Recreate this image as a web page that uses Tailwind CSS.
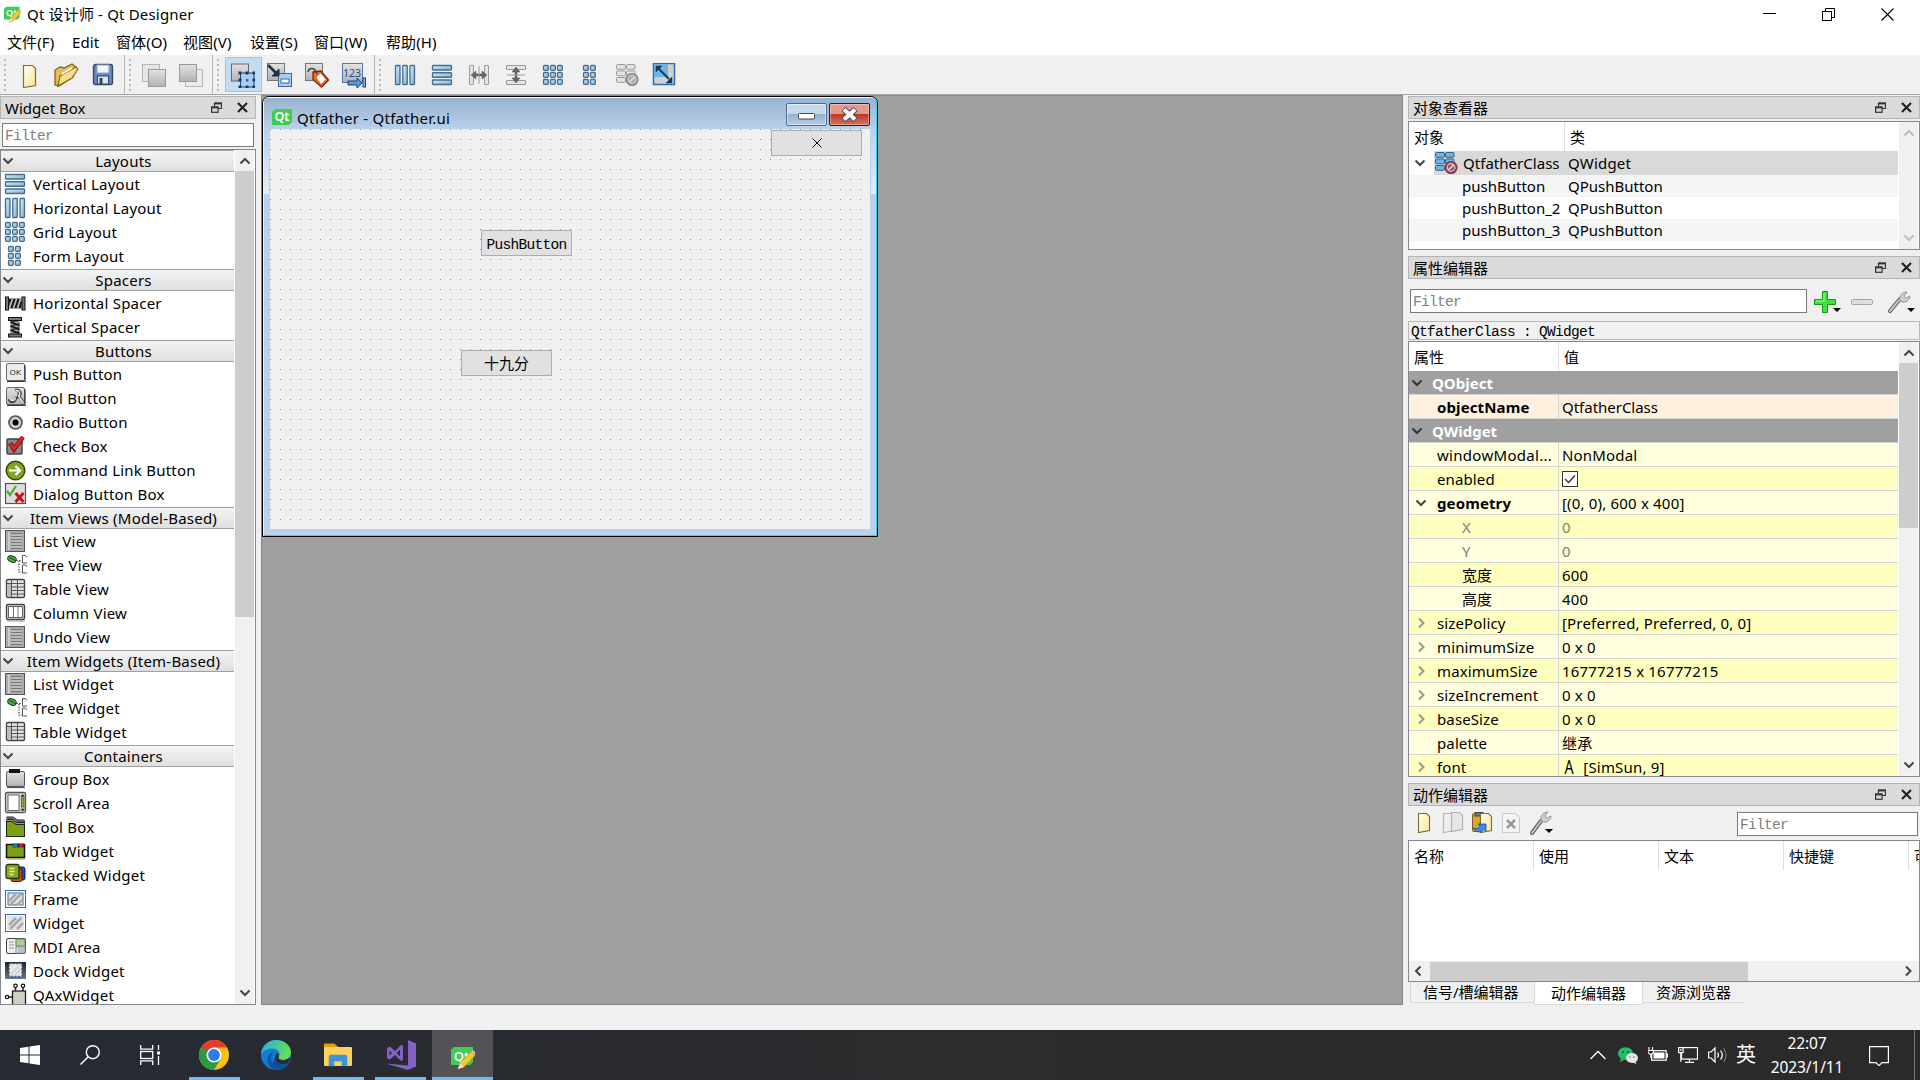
<!DOCTYPE html>
<html lang="zh-CN">
<head>
<meta charset="utf-8">
<title>Qt 设计师 - Qt Designer</title>
<script src="https://cdn.jsdelivr.net/npm/@tailwindcss/browser@4"></script>
</head>
<body class="w-[1920px] h-[1080px] overflow-hidden bg-[#f0f0f0] text-black font-['Noto_Sans','Noto_Sans_CJK_SC',sans-serif] text-[15px] leading-[22px]">
<svg class="absolute w-0 h-0">
  <defs>
    <linearGradient id="blue" x1="0" y1="0" x2="1" y2="1"><stop offset="0" stop-color="#d3f0ff"/><stop offset="1" stop-color="#78b2dc"/></linearGradient>
    <linearGradient id="gray" x1="0" y1="0" x2="0" y2="1"><stop offset="0" stop-color="#e2e2e2"/><stop offset="1" stop-color="#b2b2b2"/></linearGradient>
    <linearGradient id="paper" x1="0" y1="0" x2="1" y2="1"><stop offset="0" stop-color="#fffef0"/><stop offset="1" stop-color="#f7e596"/></linearGradient>
    <linearGradient id="dock" x1="0" y1="0" x2="0" y2="1"><stop offset="0" stop-color="#222"/><stop offset="1" stop-color="#777"/></linearGradient>
    <linearGradient id="edge" x1="0" y1="0" x2="1" y2="0.3"><stop offset="0" stop-color="#2aa9e6"/><stop offset="1" stop-color="#62e05c"/></linearGradient>
    <pattern id="dots" width="10" height="10" patternUnits="userSpaceOnUse"><rect width="1" height="1" fill="#8c8c8c"/></pattern>
  </defs>
</svg>
<div id="app" class="flex flex-col w-[1920px] h-[1080px]"></div>
<script>
const svg = (w, h, body, cls = '') => `<svg class="shrink-0 block ${cls}" width="${w}" height="${h}" viewBox="0 0 ${w} ${h}" fill="none">${body}</svg>`;
const R = (x, y, w, h, fill, stroke, rx = 0, sw = 1) => `<rect x="${x}" y="${y}" width="${w}" height="${h}" rx="${rx}" fill="${fill}"${stroke ? ` stroke="${stroke}" stroke-width="${sw}"` : ''}/>`;
const P = (d, stroke, sw = 1, fill = 'none') => `<path d="${d}" stroke="${stroke}" stroke-width="${sw}" fill="${fill}"/>`;

/* 24x24 toolbar and widget-box artwork */
const bars = (vertical, s = '#4a6c8a', f = 'url(#blue)') => [2.5, 9.75, 17].map(p => vertical ? R(p, 2.5, 4.5, 19, f, s, .7, 1.3) : R(2.5, p, 19, 4.5, f, s, .7, 1.3)).join('');
const cells = (xs, s = '#4a6c8a', f = 'url(#blue)') => xs.map(x => [2.5, 9.5, 16.5].map(y => R(x, y, 4.8, 4.8, f, s, 1, 1.3)).join('')).join('');
const listIc = R(2.5, 1.5, 19, 21, '#aaa', '#555') + R(5, 3, 2, 18, '#ccc') + P('M8 4.5h11M8 7.5h11M8 10.5h11M8 13.5h11M8 16.5h11M8 19.5h11', '#777') + P('M8 6h11M8 9h11M8 12h11M8 15h11M8 18h11', '#ccc');
const treeIc = `<ellipse cx="9" cy="6" rx="4.500" ry="3" transform="rotate(25 9 6)" fill="#4fae4c" stroke="#1c4d20"/>` + P('M6 4l7 4', '#17401a') + P('M13.500 7.500h5M16 8v11h4', '#333', 1.2).replace('fill=', 'stroke-dasharray="1.2 1.5" fill=') + P('M19.500 2.500h3l2 2.500v5h-5z', '#555', 1, '#fff') + P('M19.500 12h3l2 2.500v5.500h-5z', '#555', 1, '#fff');
const tableIc = R(3.5, 2.5, 18, 18, '#e2e2e2', '#444', 1.5, 1.4) + P('M4 6.500h17M8.500 3v17M9 10h12M9 13.500h12M9 17h12M14.500 3v17', '#555') + R(4.5, 7, 3.500, 12.500, '#bbb');
const hatch = inner => R(2.5, 3.5, 20, 17, '#fff', '#2f6fb5') + (inner ? R(5, 6, 15, 12, '#e4e4e4', '#2f6fb5') : R(4, 5, 17, 14, '#e4e4e4')) + P('M6 14l7-7M7 18l11.500-11.500M14 18l6-6', '#aaa', 2.5);
const doc = P('M7.500 3.500h9l3 3v17l-12 2z', '#7a6c3c', 1.2, 'url(#paper)');
const squareG = R(2.5, 1.5, 17, 17, 'url(#gray)', '#777');
const noGo = (c, f) => `<circle cx="17" cy="16.500" r="5.800" fill="${f}" stroke="${c}" stroke-width="1.500"/><path d="M14.200 19.200l5.600-5.600" stroke="#ddd" stroke-width="1.600"/><circle cx="17" cy="16.500" r="3.800" stroke="#ccc" stroke-width="1.200"/>`;
const brokenIc = (s, f, c, cf) => [1.5, 8, 14.5].map(y => R(1.5, y, 9, 4.8, f, s, 1) + R(11.500, y, 8.500, 4.8, f, s, 1)).join('') + noGo(c, cf);
const wrench = `<path d="M3 22L13 10" stroke="#555" stroke-width="4" stroke-linecap="round"/><path d="M3 22L13 10" stroke="#c8c8c8" stroke-width="2" stroke-linecap="round"/><path d="M13 11c-1-4 2-8 7-8l-3 4 2 2 4-2c0 4-4 7-8 6z" fill="#ccc" stroke="#888" stroke-width=".8"/>`;

const IC = {
  vlay: bars(false), hlay: bars(true), grid: cells([2.5, 9.5, 16.5]), form: cells([5.5, 12.5]),
  hsp: R(2.500, 6, 3, 13, '#777', '#111') + R(19, 6, 3, 13, '#777', '#111') + R(6, 7.500, 13, 10, '#555') + P('M6.500 17l3-9M10.500 17l3-9M14.500 17l3-9', '#b9c6cc', 1.3) + P('M8.500 17l3-9M12.500 17l3-9M16.500 17l2-6M6.500 11l1-3', '#151515', 1.5),
  vsp: R(5.5, 2.500, 13, 3, '#777', '#111') + R(5.5, 19, 13, 3, '#777', '#111') + R(7.500, 6, 9, 13, '#555') + P('M7.500 9.500l9-3M7.500 13.500l9-3M7.500 17.500l9-3', '#b9c6cc', 1.3) + P('M7.500 7l9 3.500M7.500 11l9 3.500M7.500 15l9 3.500', '#151515', 1.5),
  push: R(3.5, 1.5, 18, 17, '#ececec', '#666', 1.500) + `<text x="12.500" y="13" font-size="8" font-family="Liberation Sans" fill="#222" text-anchor="middle">OK</text>` + P('M4 19.500h18v-16', '#333', 1.2),
  tool: R(3.5, 1.5, 18, 17, 'url(#gray)', '#666', 1.5) + P('M4 19.500h18v-16', '#333', 1.2) + P('M12 4c5-1 7 4 4 6l5 7M6 13c1 4 6 4 7-1c3 0 4-4 2-6', '#444', 2.6) + P('M12.500 4.500c4-.5 5.500 3.500 3 5.500l5 7M6.500 12.500c1.500 3 5.500 3 6-1', '#eee', 1.3),
  radio: `<circle cx="12.500" cy="12.500" r="6.500" fill="#ccc" stroke="#555" stroke-width="1.700"/><circle cx="12.500" cy="12.500" r="3" fill="#000"/>`,
  check: R(4, 5, 15, 15, '#888', '#444', 1, 1.5) + P('M7 9l4 6l9-12', '#5d0a10', 4.5) + P('M7 9l4 6l9-12', '#dc2632', 3),
  cmd: `<circle cx="12.500" cy="12.500" r="9.300" fill="#84a51e" stroke="#36480a" stroke-width="1.500"/>` + P('M6 12.500h11M12.500 8l4.500 4.500l-4.500 4.500', '#fff', 2.2),
  dlg: R(2.500, 1.500, 20, 20, '#ddd', '#555', 0, 1.2) + P('M4 9l3 4l6-9', '#4caf2a', 2.2) + P('M12.500 11l8 9M20.500 11l-8 9', '#c01818', 3),
  list: listIc, tree: treeIc, table: tableIc,
  col: R(3.5, 3.5, 18, 15, '#ddd', '#444', 1.5, 1.4) + R(5.5, 5.5, 14, 11, '#fff', '#666') + P('M10.500 6v10M15 6v10', '#777') + P('M4 20h18', '#999'),
  group: R(3.5, 4.5, 18, 15, 'url(#gray)', '#555', 1.5) + R(6, 2, 11, 4, '#111') + P('M4 20.500h18', '#555', 1.2),
  scroll: R(2.500, 1.500, 20, 20, '#d4d4d4', '#555', 1.5, 1.3) + R(5, 4, 11, 15.500, '#fff', '#666') + R(18.500, 7, 2.500, 9, '#8eb41e', '#3c500a', 0, .7) + P('M18 5.500l1.700-2l1.700 2zM18 18l1.700 2l1.700-2z', '#222', .5, '#222'),
  toolbox: R(3.5, 6.5, 18, 15, '#7c9f14', '#1e2804') + P('M3.500 3h6l4 3h8M3.500 5.500h6l4 3h8', '#222', 3.2) + P('M3.500 3h6l4 3h8M3.500 5.500h6l4 3h8', '#999', 1.2),
  tab: R(3.5, 5.5, 18, 13, '#7c9f14', '#10150a', 0, 1.500) + R(10, 5, 5, 3, '#1c8ae0', '#111', 0, .6) + R(15.500, 5, 5, 3, '#d22', '#111', 0, .6) + P('M4 20h18', '#888'),
  stack: R(12, 4, 10, 13, '#1e50c0', '#0a2050', 2) + R(8, 5.500, 11, 13, '#c94f10', '#501b00', 2) + R(3, 1.500, 13, 14, '#86aa1a', '#26330a', 2, 1.3) + P('M6.500 5.500h5M6.500 8.500h5M6.500 11.500h4', '#e6f4a0', 1.3),
  frame: hatch(true), widget: hatch(false),
  mdi: R(3.500, 3.500, 19, 15, '#eee', '#444', 1.5) + R(13, 4, 9, 7, '#a9d08a', '#777') + R(13, 12, 9, 6, '#dce8f5', '#889') + P('M6 7h5M6 10h5M6 13h5M15 14h6M15 16h6', '#999'),
  dock: R(2, 3, 21, 17, 'url(#dock)') + R(6, 4.500, 13, 13, '#e8e8e8') + P('M8 15l8-8M12 16l6-6', '#ccc', 1.5) + `<rect x="6" y="4.500" width="13" height="13" stroke="#2a64b8" stroke-width="1.500" stroke-dasharray="2 1.500"/>`,
  qax: R(9.500, 8, 13, 16, '#d2cec6', '#222', 0, 1.300) + P('M12.500 8v-4M20 8v-4M9 14h-4', '#222', 1.500) + `<g fill="#fff" stroke="#111" stroke-width="1.200"><circle cx="12.500" cy="2.800" r="1.700"/><circle cx="20" cy="2.800" r="1.700"/><circle cx="4" cy="14" r="1.700"/></g>`,
  broken: brokenIc('#2f618a', '#6fb4e4', '#7d3a4a', '#a14c5c'),
};

const W = { close: svg(11, 11, P('M1 1l9 9M10 1l-9 9', '#222', 2.2)), float: svg(11, 11, P('M3.500 4v-3h7v5.500h-3', '#333', 1.2) + P('M3 1.500h8', '#333', 1.800) + R(.6, 5, 6.500, 5.300, 'none', '#333', 0, 1.2) + P('M0 5.500h7.500', '#333', 1.800)) };
const chev = (dir, c = '#444', cls = '') => svg(12, 12, P({ d: 'M1.500 3.500l4.500 4.500l4.500-4.500', u: 'M1.500 8.500l4.500-4.500l4.500 4.500', r: 'M4 1.500l4.500 4.500l-4.500 4.500', l: 'M8.500 1.500l-4.500 4.500l4.500 4.500' }[dir], c, 2), cls);
const dockHead = t => `<div class="h-[23px] shrink-0 flex items-center bg-[#dadada] border border-[#b4b4b4] pl-1 pr-[7px]"><span class="flex-1">${t}</span>${W.float}<span class="w-[15px]"></span>${W.close}</div>`;
const filter = cls => `<div class="h-[24px] shrink-0 flex items-center bg-white border border-[#7a7a7a] pl-[2px] pt-[2px] text-[#808080] font-['Liberation_Mono',monospace] text-[14.5px] tracking-[-0.7px] ${cls}">Filter</div>`;
const qtLogo = (w, h) => `<svg class="shrink-0 block" width="${w}" height="${h}" viewBox="0 0 20 16"><path d="M3 0H20V13L17 16H0V3z" fill="#41cd52"/><text x="10" y="12" font-size="12.500" font-weight="600" font-family="Noto Sans" fill="#fff" text-anchor="middle">Qt</text></svg>`;
const qtPen = (s) => `<svg class="shrink-0 block" width="${s}" height="${s}" viewBox="0 0 24 24"><path d="M3 1H22V16L19 19H0V4z" fill="#41cd52"/><text x="10.500" y="14.500" font-size="13" font-weight="600" font-family="Noto Sans" fill="#fff" text-anchor="middle">Qt</text><path d="M7 23l2-6L20 6l4 3.500L13 21z" fill="#f6c927" stroke="#b98a10" stroke-width=".6"/><path d="M20 6l2-2 3 3-1.500 2.500z" fill="#e9b0b0"/><path d="M7 23l2-6 4 4z" fill="#e8dcc8"/></svg>`;

/* title + menu */
const title = `<div class="h-[28px] shrink-0 bg-white flex items-center pl-1">${qtPen(17)}<span class="ml-[6px] flex-1 tracking-[0.17px]">Qt 设计师 - Qt Designer</span>
<div class="flex items-center gap-[46px] pr-[26px]">${svg(13, 13, P('M0 5.500h13', '#000'))}${svg(13, 13, R(.5, 3.500, 9, 9, 'none', '#000') + P('M3.500 3v-2.500h9v9h-2.500', '#000'))}${svg(13, 13, P('M.5.500l12 12M12.500.500l-12 12', '#000', 1.1))}</div></div>`;
const menu = `<div class="h-[27px] shrink-0 bg-white flex items-center pl-[7px] gap-[17px] tracking-[0.1px]">${[['文件(F)', 'w-[48px]'], ['Edit', 'w-[27px]'], ['窗体(O)', 'w-[50px]'], ['视图(V)', 'w-[50px]'], ['设置(S)', 'w-[47px]'], ['窗口(W)', 'w-[55px]'], ['帮助(H)', 'w-[52px]']].map(([m, w]) => `<span class="${w} whitespace-nowrap">${m}</span>`).join('')}</div>`;

/* toolbar */
const grip = svg(4, 32, [0, 5, 10, 15, 20, 25, 30].map(y => R(1, y, 2, 2, '#b9b9b9')).join(''));
const tb = (body, on) => `<span class="w-[37px] h-[35px] flex items-center justify-center pr-[3px] ${on ? 'bg-[#c2dcf2] border border-[#90c8f6]' : ''}">${svg(26, 26, body)}</span>`;
const gs = '#9a9a9a', gf = '#e4e4e4';
const groups = [
  ['w-[125px] pl-[3px]', 'ml-[5px]', [
    doc,
    P('M2 23V8l5-3l4 1l8-4l4 3l-3 10l-14 9z', '#8a6914', 1.3, '#e3bd58') + P('M7 14L23 5l2 2l-6 9L5 24z', '#8a6914', 1.2, '#f6dd92') + P('M9 12l10-6', '#fff', 2),
    R(3.500, 2.500, 19, 20, '#6688bd', '#2f4668', 2, 1.3) + R(7, 3, 12, 8, '#f2f6fa', '#93a5bd') + R(7.500, 14, 11, 8, '#dde4ec', '#2f4668') + R(9.500, 16, 3, 6, '#2f4668')]],
  ['w-[88px] pl-[3px]', 'ml-[4px]', [
    R(2.500, 2.500, 17, 17, '#e6e6e6', '#b5b5b5') + R(8.500, 7.500, 17, 17, 'url(#gray)', '#999'),
    R(8.500, 7.500, 17, 17, '#ececec', '#b5b5b5') + R(2.500, 2.500, 17, 17, 'url(#gray)', '#999')]],
  ['w-[162px] pl-[3px]', 'ml-[5px]', [
    R(2.500, 2, 17, 17, 'url(#gray)', '#666') + R(11.500, 11, 13.500, 14, '#a9cdf6', '#28466e') + [11, 18, 25].map(x => [11, 18, 25].map(y => x === 18 && y === 18 ? '' : R(x - 1.500, y - 1.500, 3, 3, '#1d3860')).join('')).join('') + R(17, 17, 2.500, 2.500, '#2d60b0'),
    R(1.500, 1.500, 17, 17, 'url(#gray)', '#777') + R(12.500, 11.500, 13, 13, '#a9cdf6', '#44658f') + R(15, 17, 8, 4, '#fff', '#44658f') + P('M2 3l9 9', '#234', 2.6) + P('M13 7v7h-7z', '#234', 1, '#234'),
    squareG + P('M10 10l8-1l7.500 9l-7 7l-8.500-7.500z', '#7a2a0a', 1.3, '#ef6c2a') + P('M13 15.500l4.500-4.500l5.500 6.500l-5 5z', '#a64a20', .6, '#fff') + P('M5 10c1-5 7-5 9 2', '#444', 1.5),
    R(2.500, 1.500, 20, 19, 'url(#gray)', '#5c76a0') + `<text x="3" y="15" font-size="10.500" font-family="Noto Sans" fill="#1a4f9c">123</text>` + P('M8 19h9v-3l5 5l-5 5v-3h-9z', '#17447c', 1, '#5b96dc') + R(23, 16, 2.500, 9, '#8cb8ee', '#17447c')]],
];
const lay = [
  bars(true), bars(false),
  [2.5, 17.5].map(x => R(x, 2.500, 4, 19, gf, gs, .5)).join('') + P('M4 12l5-4v3h6v-3l5 4l-5 4v-3h-6v3z', '#555', .5, '#666') + P('M12 3v18', '#999'),
  [2.5, 17.500].map(y => R(2.500, y, 19, 4, gf, gs, .5)).join('') + P('M12 4l4 5h-3v6h3l-4 5l-4-5h3v-6h-3z', '#555', .5, '#666') + P('M3 12h18', '#999'),
  cells([2.5, 9.5, 16.5]), cells([5.5, 12.5]),
  brokenIc(gs, gf, '#888', '#aaa'),
  R(1.500, .500, 21, 21, '#d0d0d0', '#2c6db0', 0, 1.5) + R(2, 1, 14, 13, '#6fb6e0') + P('M6 5l11 11', '#12395c', 2) + P('M4 3h6l-6 6zM20 20h-6l6-6z', '#12395c', .5, '#12395c')];
const toolbar = `<div class="h-[40px] shrink-0 flex border-b border-[#a8a8a8] bg-[#f0f0f0]">
${groups.map(([w, ml, ics], gi) => `<div class="${w} flex items-center border-r border-[#b4b4b4]">${grip}<div class="flex ${ml}">${ics.map((b, i) => tb(b, gi === 2 && i === 0)).join('')}</div></div>`).join('')}
<div class="flex items-center pl-[3px]">${grip}<div class="flex ml-[5px]">${lay.map(b => `<span class="w-[37px] h-[35px] flex items-center justify-center pr-[2px]">${svg(24, 24, b)}</span>`).join('')}</div></div></div>`;

/* widget box */
const cats = [
  ['Layouts', [['vlay', 'Vertical Layout'], ['hlay', 'Horizontal Layout'], ['grid', 'Grid Layout'], ['form', 'Form Layout']]],
  ['Spacers', [['hsp', 'Horizontal Spacer'], ['vsp', 'Vertical Spacer']]],
  ['Buttons', [['push', 'Push Button'], ['tool', 'Tool Button'], ['radio', 'Radio Button'], ['check', 'Check Box'], ['cmd', 'Command Link Button'], ['dlg', 'Dialog Button Box']]],
  ['Item Views (Model-Based)', [['list', 'List View'], ['tree', 'Tree View'], ['table', 'Table View'], ['col', 'Column View'], ['list', 'Undo View']]],
  ['Item Widgets (Item-Based)', [['list', 'List Widget'], ['tree', 'Tree Widget'], ['table', 'Table Widget']]],
  ['Containers', [['group', 'Group Box'], ['scroll', 'Scroll Area'], ['toolbox', 'Tool Box'], ['tab', 'Tab Widget'], ['stack', 'Stacked Widget'], ['frame', 'Frame'], ['widget', 'Widget'], ['mdi', 'MDI Area'], ['dock', 'Dock Widget'], ['qax', 'QAxWidget']]],
];
const left = `<aside class="w-[256px] shrink-0 pt-px flex flex-col">${dockHead('Widget Box')}${filter('mt-1 mx-[2px]')}
<div class="mt-[2px] h-[856px] border border-[#828790] bg-white flex overflow-hidden">
<div class="w-[233px] shrink-0 tracking-[0.22px]">${cats.map(([c, items]) => `<div class="h-[22px] flex items-center border-y border-[#a0a0a0] bg-linear-to-b from-[#f4f4f4] to-[#dfdfdf] pl-px pr-px">${chev('d')}<span class="flex-1 text-center whitespace-nowrap">${c}</span></div><div class="mb-px">${items.map(([i, t]) => `<div class="h-[24px] flex items-center pl-[3px]">${svg(24, 24, IC[i], 'ml-[-1px] mr-px')}<span class="ml-[5px]">${t}</span></div>`).join('')}</div>`).join('')}</div>
<div class="w-[19px] ml-px bg-[#f0f0f0] flex flex-col items-center justify-between"><span class="h-[21px] flex items-center">${chev('u')}</span><div class="w-full h-[446px] bg-[#cdcdcd]"></div><span class="flex-1"></span><span class="h-[23px] flex items-center">${chev('d')}</span></div>
</div></aside>`;

/* form window */
const pb = (pos, t, mono) => `<div class="absolute ${pos} w-[91px] h-[26px] bg-[#e1e1e1] border border-[#adadad] flex items-center justify-center ${mono ? "pt-[3px] font-['Liberation_Mono',monospace] text-[14.5px] tracking-[-0.7px]" : ''}">${t}</div>`;
const center = `<div class="w-[1142px] h-[910px] ml-[5px] shrink-0 bg-[#a0a0a0] border border-[#828790] relative">
<div class="absolute left-0 top-0 w-[616px] h-[441px] rounded-t-[7px] border border-black bg-[#b9d1ea] overflow-hidden">
<div class="w-full h-full border border-t-white border-l-[#e4f0fb] border-r-[#35d0f0] border-b-[#35d0f0] rounded-t-[6px] flex flex-col relative">
<div class="h-[31px] shrink-0 bg-linear-to-b from-[#98b2d1] to-[#b9d1ea] flex items-start pl-2"><div class="mt-[11px]">${qtLogo(20, 16)}</div><span class="ml-[5px] mt-[9px] flex-1 tracking-[0.26px]">Qtfather - Qtfather.ui</span>
<div class="flex gap-[2px] mt-[5px] mr-[6px]">
<div class="w-[41px] h-[23px] border border-[#4d6a8f] rounded-[2px] bg-linear-to-b from-[#c5d8ec] from-45% via-[#95b0cf] via-50% to-[#b4cce6] shadow-[inset_0_0_0_1px_rgba(255,255,255,0.5)] flex items-center justify-center pt-1">${svg(17, 7, R(.5, .5, 16, 5.500, '#fff', '#445', 1))}</div>
<div class="w-[41px] h-[23px] border border-[#4a1410] rounded-[2px] bg-linear-to-b from-[#e39a8e] from-45% via-[#bc3c27] via-50% to-[#d4705c] shadow-[inset_0_0_0_1px_rgba(255,255,255,0.35)] flex items-center justify-center">${svg(19, 17, P('M3.500 3l12 11M15.500 3l-12 11', '#4a4a55', 6) + P('M4 3.500l11 10M15 3.500l-11 10', '#fff', 4))}</div></div></div>
<div class="absolute left-0 top-[31px] w-[5px] h-[65px] bg-linear-to-b from-[#b9d1ea] to-[#e3eefa]"></div>
<div class="absolute right-0 top-[31px] w-[5px] h-[65px] bg-linear-to-b from-[#b9d1ea] to-[#e3eefa]"></div>
<div class="ml-[6px] w-[600px] h-[400px] bg-[#f0f0f0] relative">${svg(600, 400, R(0, 0, 600, 400, 'url(#dots)'))}
${pb('left-[501px] top-[1px]', svg(10, 10, P('M.5.500l9 9M9.500.500l-9 9', '#000', 1)))}${pb('left-[211px] top-[101px]', 'PushButton', true)}${pb('left-[191px] top-[221px]', '十九分')}</div>
</div></div></div>`;

/* object inspector */
const kids = [['pushButton', 'bg-[#f5f5f5]'], ['pushButton_2', ''], ['pushButton_3', 'bg-[#f5f5f5]']];
const inspector = `${dockHead('对象查看器')}<div class="mt-[2px] h-[129px] border border-[#828790] bg-white flex"><div class="w-[489px]">
<div class="h-[29px] flex items-center"><span class="w-[156px] h-full flex items-center pl-[5px] pt-px border-r border-[#e0e0e0]">对象</span><span class="pl-[5px] pt-px">类</span></div>
<div class="h-[24px] flex"><span class="w-[25px] flex items-center pl-[5px]">${chev('d')}</span><div class="flex-1 bg-[#d9d9d9] flex items-center">${svg(24, 24, IC.broken)}<span class="w-[110px] shrink-0 pl-[5px] tracking-[0.03px]">QtfatherClass</span><span class="tracking-[0.2px]">QWidget</span></div></div>
${kids.map(([n, bg]) => `<div class="h-[22px] flex items-center ${bg}"><span class="w-[159px] shrink-0 pl-[53px]">${n}</span><span>QPushButton</span></div>`).join('')}</div>
<div class="flex-1 ml-px mr-px bg-[#f0f0f0] flex flex-col items-center justify-between py-[5px]">${chev('u', '#bfbfbf')}${chev('d', '#bfbfbf')}</div></div>`;

/* property editor: [name, value, row colour, indent, arrow, flags] */
const L = 'bg-[#ffffdd]', D = 'bg-[#ffffbf]';
const props = [['QObject'], ['objectName', 'QtfatherClass', 'bg-[#fff0df]', 28, '', 'b'], ['QWidget'], ['windowModal...', 'NonModal', L, 28], ['enabled', null, D, 28], ['geometry', '[(0, 0), 600 x 400]', L, 28, 'd', 'b'], ['X', '0', D, 53, '', 'g'], ['Y', '0', L, 53, '', 'g'], ['宽度', '600', D, 53], ['高度', '400', L, 53], ['sizePolicy', '[Preferred, Preferred, 0, 0]', D, 28, 'r'], ['minimumSize', '0 x 0', L, 28, 'r'], ['maximumSize', '16777215 x 16777215', D, 28, 'r'], ['sizeIncrement', '0 x 0', L, 28, 'r'], ['baseSize', '0 x 0', D, 28, 'r'], ['palette', '继承', L, 28], ['font', '<span class="inline-block font-[\'Liberation_Serif\',serif] text-[19px] scale-x-75 ml-px mr-[8px]">A</span>[SimSun, 9]', D, 28, 'r']];
const prow = ([n, v, bg, ind, ar, fl]) => v === undefined
  ? `<div class="h-[24px] bg-[#a0a0a0] border-b border-[#d4d4d4] flex items-center pl-[2px] text-white font-bold text-[15px]">${chev('d', '#333')}<span class="ml-[9px]">${n}</span></div>`
  : `<div class="h-[24px] ${bg} border-b border-[#d4d4d4] flex items-center ${fl === 'g' ? 'text-[#808080]' : ''}"><span class="w-[150px] h-full shrink-0 border-r border-[#d4d4d4] flex items-center tracking-[0.12px]"><span class="${ind === 53 ? 'w-[53px]' : 'w-[28px]'} shrink-0 pl-[6px]">${ar ? chev(ar, ar === 'r' ? '#9a9a88' : '#444') : ''}</span><span class="${fl === 'b' ? 'font-bold text-[15px]' : n === 'windowModal...' ? 'tracking-[0.3px]' : ''}">${n}</span></span><span class="pl-[3px] flex items-center ${n === 'objectName' ? 'tracking-[-0.02px]' : 'tracking-[0.18px]'}">${v === null ? svg(16, 16, R(.5, .5, 15, 15, '#fff', '#333') + P('M3 8l3.500 3.500l6.500-7', '#333', 1.4)) : v}</span></div>`;
const dropTri = `<path d="M20 20h8l-4 4z" fill="#000"/>`;
const property = `<div class="mt-[6px]">${dockHead('属性编辑器')}</div>
<div class="flex items-center mt-[10px] pl-[2px] h-[24px]">${filter('w-[397px]')}<div class="flex ml-[6px] gap-[9px] pt-px">
${svg(28, 28, P('M9.500 3.500h5v8h8v5h-8v8h-5v-8h-8v-5h8z', '#119c11', 1, '#3ee23e') + P('M11 5v8h-8', '#a4f7a4', 1.2) + dropTri)}
${svg(28, 28, R(1.500, 11.500, 21, 5, '#ddd', '#a5a5a5', 1))}${svg(28, 28, `<g transform="translate(0 1)">${wrench}</g>` + dropTri)}</div></div>
<div class="mt-[8px] h-[19px] border border-[#b9b9b9] flex items-center pl-[2px] pt-[2px] font-['Liberation_Mono',monospace] text-[14.5px] tracking-[-0.7px]">QtfatherClass : QWidget</div>
<div class="mt-px h-[436px] border border-[#828790] bg-white flex overflow-hidden"><div class="w-[489px] shrink-0">
<div class="h-[29px] flex"><span class="w-[150px] flex items-center pl-[5px] pt-px border-r border-[#e0e0e0]">属性</span><span class="pl-[5px] flex items-center pt-px">值</span></div>
${props.map(prow).join('')}</div>
<div class="w-[19px] ml-px bg-[#f0f0f0] flex flex-col items-center"><span class="h-[21px] flex items-center">${chev('u')}</span><div class="w-full h-[165px] bg-[#cdcdcd]"></div><span class="flex-1"></span><span class="h-[23px] flex items-center">${chev('d')}</span></div></div>`;

/* action editor */
const doc24 = (dx, s, f) => `<g transform="translate(${dx} 0)"><path d="M6.500 2.500h8l3 3v14l-11 2z" stroke="${s}" stroke-width="1.100" fill="${f}"/></g>`;
const actIcons = [doc24(0, '#7a6c3c', 'url(#paper)'), doc24(-4, '#b5b5b5', '#eee') + `<g transform="translate(0 -1)">${doc24(4, '#b0b0b0', '#e6e6e6')}</g>`,
  R(2.500, 2.500, 13, 18, '#d6a92c', '#80611a', 1.500) + R(5, 1.500, 8, 3.500, '#777', '#444') + doc24(4, '#8a6d22', 'url(#paper)') + P('M3 17c5 2 7-1 7-3l-2-1h8v7l-2-1.500c-3 4-8 3-11-1.500z', '#1450a0', .8, '#3b8be8'),
  P('M3.500 2.500h13l4 4v15h-17z', '#c9c9c9', 1, '#f4f4f4') + P('M8 9l8 8M16 9l-8 8', '#999', 2.500)];
const action = `<div class="mt-[6px]">${dockHead('动作编辑器')}</div>
<div class="h-[34px] flex items-center pl-1 pr-[2px] pt-[2px]"><div class="flex gap-[5px]">${actIcons.map(b => svg(24, 24, b)).join('')}${svg(28, 28, wrench.replace(/M3 22L13 10/g, 'M4 24L13 12') + `<path d="M17 20h8l-4 4z" fill="#000"/>`, 'mt-[-2px]')}</div><span class="flex-1"></span>${filter('w-[181px]')}</div>
<div class="h-[142px] border border-[#828790] bg-white flex flex-col overflow-hidden"><div class="h-[29px] flex overflow-hidden">${['名称', '使用', '文本', '快捷键'].map(t => `<span class="w-[125px] shrink-0 border-r border-[#e0e0e0] pl-[5px] pt-px flex items-center">${t}</span>`).join('')}<span class="pl-[5px] pt-[4px] whitespace-nowrap">可选的</span></div>
<span class="flex-1"></span><div class="h-[20px] bg-[#f0f0f0] flex items-center"><span class="w-[21px] pl-[3px]">${chev('l')}</span><div class="w-[318px] h-[19px] bg-[#cdcdcd]"></div><span class="flex-1"></span>${chev('r', '#444', 'mr-[5px]')}</div></div>
<div class="flex items-start pl-[2px] leading-[20px]"><span class="w-[124px] h-[21px] border border-t-0 border-r-0 border-[#d9d9d9] pl-[12px]">信号/槽编辑器</span><span class="w-[109px] h-[23px] border border-t-0 border-[#d9d9d9] bg-white pl-[16px] pt-px">动作编辑器</span><span class="w-[101px] h-[21px] border-b border-[#d9d9d9] pl-[13px]">资源浏览器</span></div>`;
const right = `<aside class="w-[512px] ml-[5px] shrink-0 pt-px flex flex-col whitespace-nowrap">${inspector}${property}${action}</aside>`;

/* taskbar */
const task = (w, body, cls = '', line = '') => `<div class="${w} h-[50px] relative flex items-center justify-center ${cls}">${body}${line ? `<span class="absolute bottom-0 ${line} h-[3px] bg-[#76b9ed]"></span>` : ''}</div>`;
const chrome = svg(30, 30, `<circle cx="15" cy="15" r="15" fill="#fbc116"/><path d="M2 7.500A15 15 0 0 0 15 30L21.500 18.700L15 15L8.500 18.700z" fill="#2a9a48"/><path d="M2 7.500A15 15 0 0 1 28 7.500H15L8.500 18.700z" fill="#e33b2e"/><path d="M2 7.500L8.500 18.700L12 12z" fill="#2a9a48"/><circle cx="15" cy="15" r="7.500" fill="#fff"/><circle cx="15" cy="15" r="5.900" fill="#2d7cf0"/>`);
const edge = svg(30, 30, `<circle cx="15" cy="15" r="15" fill="#0f7fd4"/><path d="M0 14C1 5 8 0 15 0c9 0 15 6 15 12.500c0 5-4 7.500-8 7.500c-3 0-5-1-4.500-2.500c3-5-1-9-6-9C6 8.500 2 11 0 14z" fill="url(#edge)"/><path d="M12 12c-4 5-2 13 6 15c4 1 8-1 10-4c-3 6-9 8-15 6.500C5 27 4 15 12 12z" fill="#0b55a5"/><path d="M17.500 17.500c-.5 1.500 1.500 2.500 4.500 2.500c3 0 6-1.500 7-3.500c0 3-.5 5-2 7c-5 2-13 1-13-6c0-2 1-4 2.500-4.500c1.500 1 2 3 1 4.500z" fill="#2b2d33"/><path d="M14 18c1 6 8 8 14 5c-4 7-14 7-17 1z" fill="#0c4f9c"/>`);
const folder = svg(28, 24, P('M.5 1h10l3 3h-13z', '#dd9f10', 1, '#dd9f10') + R(0, 4, 28, 19, '#fcd05c', '', 1) + P('M5 23v-9q0-2 2-2h14q2 0 2 2v9h-5v-5h-8v5z', '#3d95d8', .5, '#3d95d8'));
const vs = svg(30, 30, `<path d="M22 0l8 3.500v23L22 30L0 23.500l22 2z" fill="#8661c5"/><path d="M1 8l3-1.500l5 4.500l6-6l2 1v14l-2 1l-6-6l-5 4.500L1 18z" fill="#8661c5"/><path d="M3.500 10.500v5l2.500-2.500zM14 9.500v7L10.500 13z" fill="#2b2d33"/>`);
const taskbar = `<div class="h-[50px] shrink-0 bg-linear-to-r from-[#252a33] via-[#2c2c2e] to-[#2a2a2b] flex text-white">
${task('w-[60px]', svg(20, 20, `<path d="M0 3l8.500-1.300V9.500H0zM9.500 1.500L20 0v9.500H9.500zM0 10.500h8.500v7.800L0 17zM9.500 10.500H20V20L9.500 18.500z" fill="#fff"/>`))}
${task('w-[60px]', svg(20, 20, `<circle cx="12.800" cy="7.200" r="6.500" stroke="#fff" stroke-width="1.400"/>` + P('M8 12L.5 19.500', '#fff', 1.4)))}
${task('w-[60px]', svg(20, 20, P('M.7 0v4.200h12V0M.7 20v-4.200h12V20M18.500 0v5M18.500 11v9', '#fff', 1.300) + R(.7, 6.500, 12, 7, 'none', '#fff', 0, 1.3) + R(17, 6.500, 3, 3, '#fff')))}
${task('w-[66px] pl-[2px]', chrome, '', 'left-[9px] w-[51px]')}${task('w-[60px]', edge)}${task('w-[62px] pl-[2px]', folder, '', 'left-[7px] w-[51px]')}${task('w-[64px] pl-px', vs, '', 'left-[7px] w-[51px]')}
${task('w-[61px]', `<span class="mt-[5px] ml-[1px]">${qtPen(24)}</span>`, 'bg-[#525357]', 'left-0 w-[61px]')}
<span class="flex-1"></span>
<div class="flex items-center">
<span class="mr-[12px]">${svg(16, 10, P('M.5 9L8 1.500L15.500 9', '#fff', 1.3))}</span>
<span class="mr-[10px]">${svg(20, 17, `<ellipse cx="7.500" cy="6.500" rx="7.500" ry="6.300" fill="#21c064"/><path d="M3 11l-1 4 4-2z" fill="#21c064"/><ellipse cx="14" cy="11" rx="6" ry="5" fill="#e6e6e6"/><path d="M17 14l1.500 3-4-1.500z" fill="#e6e6e6"/><circle cx="5" cy="5" r=".9" fill="#145"/><circle cx="10" cy="5" r=".9" fill="#145"/><circle cx="12" cy="10" r=".8" fill="#777"/><circle cx="16" cy="10" r=".8" fill="#777"/>`)}</span>
<span class="mr-[10px]">${svg(20, 16, R(3.700, 3.700, 14.500, 9.500, 'none', '#fff', 0, 1.200) + R(5.500, 5.500, 11, 6, '#fff') + R(18.500, 6.500, 1.500, 4, '#fff') + P('M1 0v3M4.500 0v3M0 3.500h5.500v2l-1.500 1.500h-2.500l-1.500-1.500zM2.800 7v4', '#fff', 1.1, '#2b2b2c'))}</span>
<span class="mr-[10px]">${svg(20, 16, R(3.500, .6, 16, 11.500, 'none', '#fff', 0, 1.2) + P('M11.500 12v3M7 15.400h9', '#fff', 1.2) + R(.6, .6, 4.500, 5, '#2b2b2c', '#fff', 0, 1.200) + P('M2.800 6v9M2.800 2v2', '#fff', 1.1))}</span>
<span class="mr-[8px]">${svg(20, 18, P('M.6 6h2.500L7 2v14l-3.900-4H.6z', '#fff', 1.200) + P('M9.500 6.500q2 2.500 0 5M12.500 4.500q3.500 4.500 0 9', '#fff', 1.200) + P('M15.500 2q5 7 0 14', '#777', 1.200))}</span>
<span class="text-[20px] w-[20px] mr-[2px]">英</span>
<div class="w-[98px] text-center text-[15.500px] leading-[24px] tracking-[-0.1px] pb-px">22:07<br>2023/1/11</div>
<span class="ml-[13px] mt-[2px]">${svg(20, 20, P('M.6.600h18.800v16h-6.400l-3 3l-3-3h-6.400z', '#fff', 1.200))}</span>
<span class="ml-[25px] w-px h-[50px] bg-[#777] mr-[5px]"></span></div></div>`;

document.getElementById('app').innerHTML = title + menu + toolbar + `<main class="h-[935px] shrink-0 flex items-start">${left}${center}${right}</main>` + taskbar;
</script>
</body>
</html>
